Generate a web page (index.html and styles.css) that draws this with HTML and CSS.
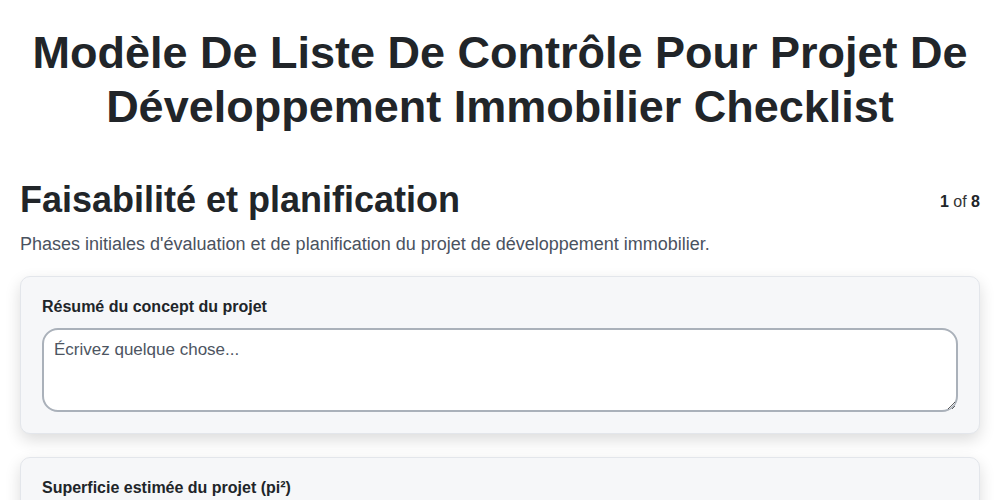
FILE: index.html
```html
<!DOCTYPE html>
<html lang="fr">
<head>
<meta charset="utf-8">
<title>Checklist</title>
<link rel="stylesheet" href="styles.css">
</head>
<body>
<div class="page">
  <h1 class="title">Modèle De Liste De Contrôle Pour Projet De Développement Immobilier Checklist</h1>
  <div class="section-head">
    <h2 class="section-title">Faisabilité et planification</h2>
    <div class="pager"><b>1</b> of <b>8</b></div>
  </div>
  <p class="section-desc">Phases initiales d'évaluation et de planification du projet de développement immobilier.</p>
  <div class="card">
    <label class="field-label">Résumé du concept du projet</label>
    <textarea class="field-text" placeholder="Écrivez quelque chose..."></textarea>
  </div>
  <div class="card">
    <label class="field-label">Superficie estimée du projet (pi²)</label>
    <input class="field-input" type="text">
  </div>
</div>
</body>
</html>
```
FILE: styles.css
```css
* { box-sizing: border-box; }
body {
  margin: 0;
  font-family: "Liberation Sans", Arial, sans-serif;
  color: #1f2328;
  background: #fff;
}
.page {
  padding: 26px 20px 20px;
}
.title {
  margin: 0;
  text-align: center;
  font-size: 45px;
  line-height: 54px;
  font-weight: 700;
  color: #212529;
}
.section-head {
  display: flex;
  justify-content: space-between;
  align-items: flex-start;
  margin-top: 44px;
}
.section-title {
  margin: 0;
  font-size: 36px;
  line-height: 43px;
  font-weight: 700;
  color: #212529;
}
.pager {
  font-size: 16px;
  line-height: 20px;
  color: #333;
  padding-top: 14px;
}
.pager b { color: #212529; }
.section-desc {
  margin: 10px 0 18px;
  font-size: 18px;
  line-height: 27px;
  color: #4a5260;
}
.card {
  background: #f6f7f9;
  border: 1px solid #e3e6eb;
  border-radius: 10px;
  box-shadow: 0 6px 16px rgba(0,0,0,0.14);
  padding: 20px 21px 21px 21px;
  margin-bottom: 23px;
}
.field-label {
  display: block;
  font-size: 16px;
  line-height: 20px;
  font-weight: 700;
  color: #212529;
  margin-bottom: 11px;
}
.field-text, .field-input {
  display: block;
  width: 100%;
  border: 2px solid #aab1ba;
  border-radius: 16px;
  background: #fff;
  font-family: "Liberation Sans", Arial, sans-serif;
  font-size: 17px;
  color: #212529;
  padding: 10px 10px;
}
.field-text {
  height: 84px;
  resize: vertical;
}
.field-input { height: 44px; }
.field-text::placeholder { color: #4d5562; }
```
